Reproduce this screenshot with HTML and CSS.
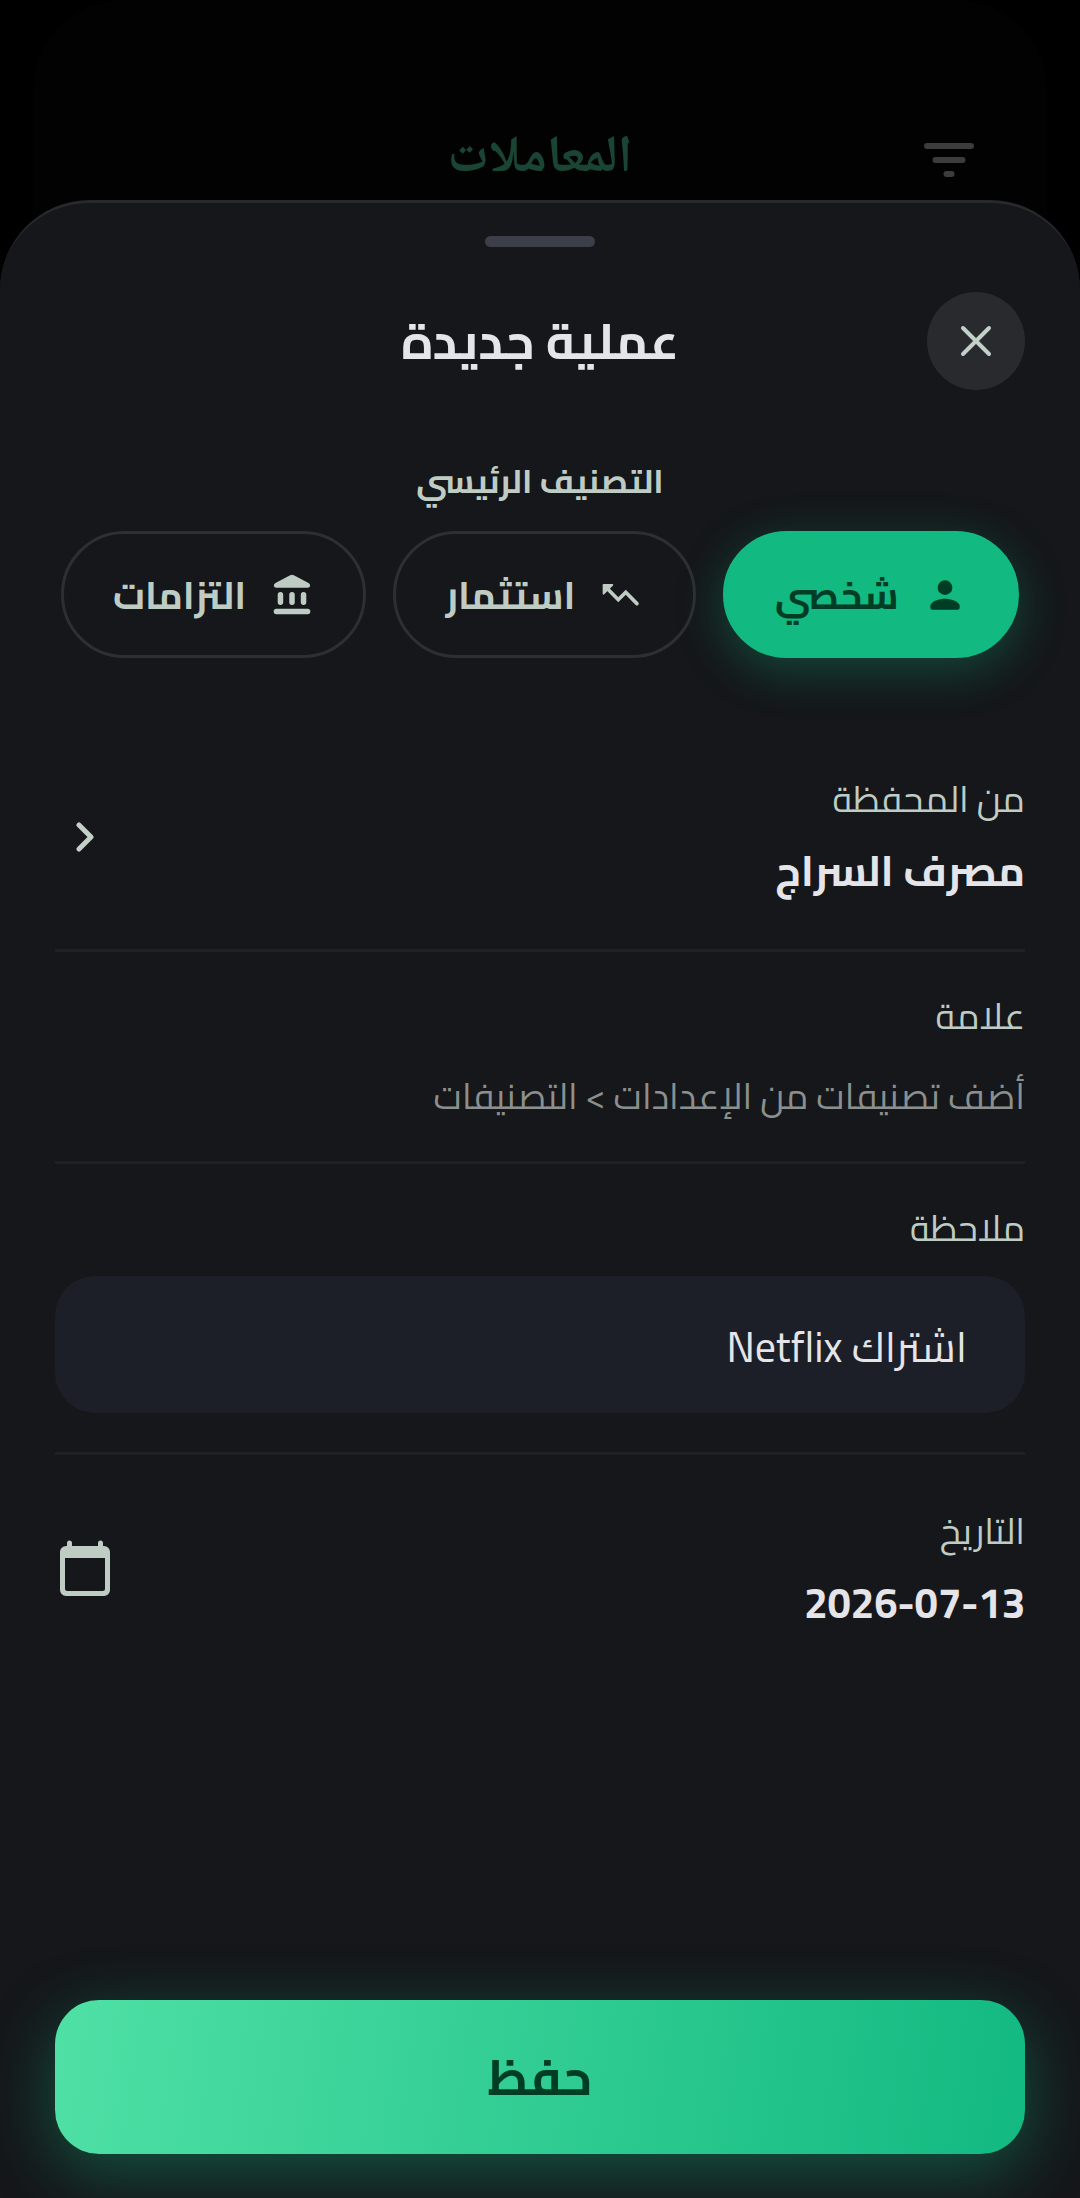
FILE: index.html
```html
<!DOCTYPE html>
<html lang="ar" dir="rtl">
<head>
  <meta charset="utf-8">
  <meta name="viewport" content="width=device-width, initial-scale=1">
  <title>عملية جديدة</title>
  <link rel="stylesheet" href="styles.css">
</head>
<body>
  <div class="screen">
    <header class="page-bar">
      <svg class="filter-icon" viewBox="0 0 50 34" aria-hidden="true">
        <path d="M3 3H47M11.500 17H38.500M22.500 31H27.500"/>
      </svg>
      <p class="page-title">المعاملات</p>
    </header>

    <main class="sheet">
      <div class="handle"></div>

      <div class="sheet-header">
        <button class="close" type="button" aria-label="إغلاق">
          <svg viewBox="0 0 32 32" aria-hidden="true"><path d="M3 3L29 29M29 3L3 29"/></svg>
        </button>
        <h1 class="sheet-title">عملية جديدة</h1>
      </div>

      <form class="form">
        <section class="category">
          <h2 class="category-title">التصنيف الرئيسي</h2>
          <div class="chips">
            <button class="chip chip-active" type="button" aria-pressed="true">
              <svg class="chip-icon" viewBox="0 0 24 24" aria-hidden="true">
                <circle cx="12" cy="8" r="4"/>
                <path d="M12 14c-2.670 0-8 1.340-8 4v1c0 .550.450 1 1 1h14c.550 0 1-.450 1-1v-1c0-2.660-5.330-4-8-4z"/>
              </svg>
              <span>شخصي</span>
            </button>
            <button class="chip" type="button" aria-pressed="false">
              <svg class="chip-icon" viewBox="0 0 24 24" aria-hidden="true">
                <path d="M2 6.500a.5.5 0 0 1 .5-.5h4.800a.5.5 0 0 1 .350.850L2.850 11.650A.5.5 0 0 1 2 11.300z"/>
                <path d="M4.500 8.500L10.500 14.600L14.600 10.500L20.700 16.700" class="trend-line"/>
              </svg>
              <span>استثمار</span>
            </button>
            <button class="chip" type="button" aria-pressed="false">
              <svg class="chip-icon" viewBox="0 0 24 24" aria-hidden="true">
                <path d="M11 1.200L3 5.400C1.600 6.200 2 8 3.500 8H20.500C22 8 22.400 6.200 21 5.400L13 1.200C12.300 0.800 11.700 0.800 11 1.200z"/>
                <path d="M5.700 11.800v4.200M12 11.800v4.200M18.300 11.800v4.200M3.500 21h17" class="bank-bars"/>
              </svg>
              <span>التزامات</span>
            </button>
          </div>
        </section>

        <div class="row row-wallet">
          <div class="row-text">
            <span class="label">من المحفظة</span>
            <strong class="value">مصرف السراج</strong>
          </div>
          <button class="icon-button" type="button" aria-label="اختيار المحفظة">
            <svg class="chevron" viewBox="0 0 18 30" aria-hidden="true"><path d="M3 3L15 15L3 27"/></svg>
          </button>
        </div>

        <div class="row row-tag">
          <div class="row-text">
            <span class="label">علامة</span>
            <p class="hint">أضف تصنيفات من الإعدادات &gt; التصنيفات</p>
          </div>
        </div>

        <div class="row row-note">
          <label class="label" for="note">ملاحظة</label>
          <input class="note" id="note" type="text" value="اشتراك Netflix">
        </div>

        <div class="row row-date">
          <div class="row-text">
            <span class="label">التاريخ</span>
            <strong class="value"><bdi>2026-07-13</bdi></strong>
          </div>
          <button class="icon-button" type="button" aria-label="اختيار التاريخ">
            <svg class="calendar" viewBox="0 0 52 58" aria-hidden="true">
              <path fill-rule="evenodd" d="M8 6V3a2.500 2.500 0 0 1 5 0V6H39V3a2.500 2.500 0 0 1 5 0V6h1a6 6 0 0 1 6 6V50a6 6 0 0 1-6 6H7a6 6 0 0 1-6-6V12a6 6 0 0 1 6-6zM6 18V48.500a2.500 2.500 0 0 0 2.500 2.500h35a2.500 2.500 0 0 0 2.500-2.500V18z"/>
            </svg>
          </button>
        </div>

        <button class="save" type="submit">حفظ</button>
      </form>
    </main>
  </div>
</body>
</html>
```

FILE: styles.css
```css
* {
  box-sizing: border-box;
}

body {
  margin: 0;
  background: #000;
  color: #e4e4e9;
  font-family: Cairo, "Noto Sans", "Noto Sans Arabic", "DejaVu Sans", sans-serif;
}

button,
input {
  margin: 0;
  border: 0;
  font: inherit;
}

h1,
h2,
p {
  margin: 0;
}

button {
  padding: 0;
  background: none;
  color: inherit;
  cursor: pointer;
}

svg {
  display: block;
  flex: none;
}

.screen {
  display: flex;
  flex-direction: column;
  min-height: 100vh;
}

/* Dimmed page behind the sheet */
.page-bar {
  display: grid;
  grid-template-columns: 50px 1fr 50px;
  align-items: center;
  margin: 0 33px;
  padding: 120px 73px 92px;
  height: 291px;
  border-radius: 90px 90px 0 0;
  background: #020202;
}

.filter-icon {
  width: 50px;
  fill: none;
  stroke: #3b3c3b;
  stroke-width: 6;
  stroke-linecap: round;
}

.page-title {
  color: #1a4433;
  font-family: "Noto Naskh Arabic", "DejaVu Sans", serif;
  font-size: 52px;
  font-weight: 700;
  line-height: 72px;
  text-align: center;
}

/* The sheet overlaps the page, which shows past its rounded corners */
.sheet {
  display: flex;
  flex: 1;
  flex-direction: column;
  margin-top: -91px;
  padding: 33px 55px 44px;
  border-top: 3px solid #28292c;
  border-radius: 90px 90px 0 0;
  background: #15171a;
}

.handle {
  align-self: center;
  width: 110px;
  height: 11px;
  border-radius: 6px;
  background: #3c3e4a;
}

.sheet-header {
  display: grid;
  grid-template-columns: 98px 1fr 98px;
  align-items: center;
  margin-top: 45px;
}

.close {
  display: grid;
  place-items: center;
  height: 98px;
  border-radius: 50%;
  background: #292a2d;
}

.close svg {
  width: 32px;
  fill: none;
  stroke: #c2d0c8;
  stroke-width: 4;
  stroke-linecap: round;
}

.sheet-title {
  font-size: 50px;
  font-weight: 700;
  line-height: 72px;
  text-align: center;
}

.form {
  display: flex;
  flex: 1;
  flex-direction: column;
}

.category {
  padding: 67px 6px 0;
}

.category-title {
  color: #bfccc4;
  font-size: 33px;
  font-weight: 700;
  line-height: 48px;
  text-align: center;
}

.chips {
  display: grid;
  grid-template-columns: 296fr 302fr 305fr;
  gap: 27px;
  margin-top: 26px;
}

.chip {
  display: flex;
  align-items: center;
  justify-content: center;
  gap: 24px;
  height: 127px;
  border: 3px solid #2d2f32;
  border-radius: 64px;
  color: #bfccc4;
  font-size: 38px;
  font-weight: 700;
}

.chip-active {
  border-color: #12b981;
  background: #12b981;
  box-shadow: 0 12px 48px rgba(18, 185, 129, 0.3);
  color: #003d25;
}

.chip-icon {
  width: 44px;
  fill: currentColor;
}

.bank-bars {
  stroke: currentColor;
  stroke-width: 3;
  stroke-linecap: round;
}

.trend-line {
  fill: none;
  stroke: currentColor;
  stroke-width: 2;
  stroke-linecap: round;
}

.row {
  display: flex;
  align-items: center;
  justify-content: space-between;
  border-bottom: 3px solid #1f2124;
}

.row-text {
  display: flex;
  flex-direction: column;
}

.label {
  color: #bfccc4;
  font-size: 36px;
  line-height: 56px;
}

.value {
  margin-top: 16px;
  font-size: 42px;
  font-weight: 700;
  line-height: 56px;
}

.hint {
  margin-top: 24px;
  color: #8b908e;
  font-size: 36px;
  line-height: 56px;
}

.row-wallet {
  margin-top: 73px;
  padding: 40px 0 50px;
}

.row-tag {
  padding: 36px 0 37px;
}

.row-note {
  flex-direction: column;
  align-items: stretch;
  padding: 36px 0 39px;
}

.row-date {
  padding: 48px 0;
  border-bottom: 0;
}

.note {
  width: 100%;
  height: 137px;
  margin-top: 20px;
  padding: 4px 58px 0;
  border-radius: 40px;
  outline: 0;
  background: #1c1f27;
  color: #e4e4e9;
  font-size: 42px;
}

.icon-button {
  display: grid;
  place-items: center;
  width: 60px;
  height: 60px;
  margin-top: 4px;
}

.chevron {
  width: 18px;
  fill: none;
  stroke: #c2d0c8;
  stroke-width: 5;
  stroke-linecap: round;
  stroke-linejoin: round;
}

.calendar {
  width: 52px;
  fill: #bfccc4;
}

.save {
  height: 154px;
  margin-top: auto;
  border-radius: 44px;
  background: linear-gradient(98deg, #4fe0a5, #12b981);
  box-shadow: 0 18px 66px rgba(18, 185, 129, 0.38);
  color: #003d25;
  font-size: 50px;
  font-weight: 700;
}
```
